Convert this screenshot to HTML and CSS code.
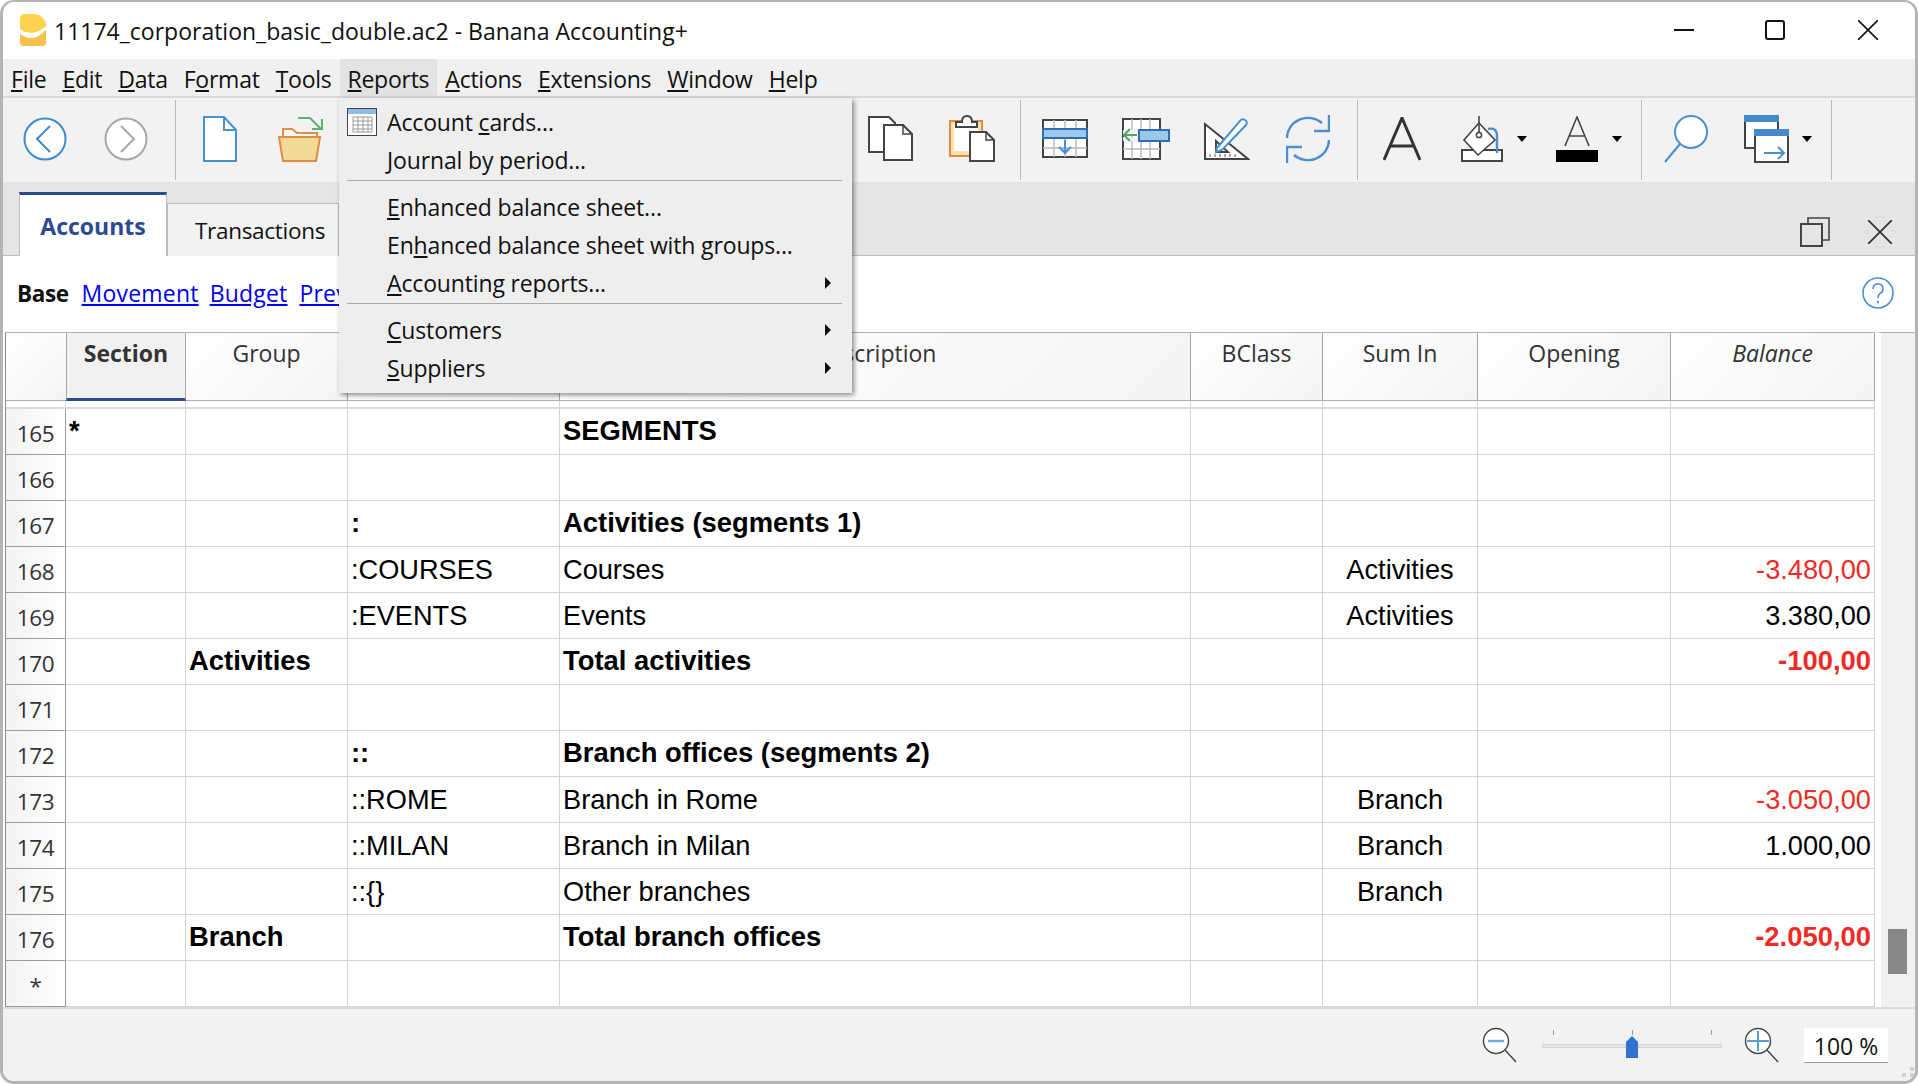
FILE: index.html
```html
<!DOCTYPE html>
<html lang="en">
<head>
    <meta charset="UTF-8" />
    <title>11174_corporation_basic_double.ac2 - Banana Accounting+</title>
    <link rel="stylesheet" href="styles.css">
</head>
<body>
<div class="window">
    <div class="titlebar">
        <svg class="app-icon" width="26" height="32" viewBox="0 0 26 32"><path d="M5 0H15Q19 0 22 3L25 7Q26 9 26 11V28Q26 32 22 32H4Q0 32 0 28V5Q0 0 5 0Z" fill="#fbd34e"/><path d="M0 15Q13 24 26 12V16Q13 30 0 20Z" fill="#fff"/><path d="M0 20Q13 30 26 16V28Q26 32 22 32H4Q0 32 0 28Z" fill="#f7c04a"/></svg>
        <span class="title">11174_corporation_basic_double.ac2 - Banana Accounting+</span>
        <div class="win-controls">
            <svg width="20" height="20" viewBox="0 0 20 20"><path d="M0 10H20" stroke="#111" stroke-width="2"/></svg>
            <svg width="20" height="20" viewBox="0 0 20 20"><rect x="1" y="1" width="18" height="18" rx="2" fill="none" stroke="#111" stroke-width="2"/></svg>
            <svg class="win-close" width="20" height="20" viewBox="0 0 20 20"><path d="M0 0L20 20M20 0L0 20" stroke="#111" stroke-width="1.6"/></svg>
        </div>
    </div>

    <div class="menubar">
        <span class="menu"><u>F</u>ile</span>
        <span class="menu"><u>E</u>dit</span>
        <span class="menu"><u>D</u>ata</span>
        <span class="menu">F<u>o</u>rmat</span>
        <span class="menu"><u>T</u>ools</span>
        <span class="menu menu-open"><u>R</u>eports</span>
        <span class="menu"><u>A</u>ctions</span>
        <span class="menu"><u>E</u>xtensions</span>
        <span class="menu"><u>W</u>indow</span>
        <span class="menu"><u>H</u>elp</span>
    </div>

    <div class="toolbar">
        <div class="tool"><svg width="44" height="44" viewBox="0 0 44 44"><circle cx="22" cy="22" r="20.5" fill="#fff" stroke="#3f8bd0" stroke-width="2"/><path d="M27 9L14 22L27 35" fill="none" stroke="#3f8bd0" stroke-width="2"/></svg></div>
        <div class="tool"><svg width="44" height="44" viewBox="0 0 44 44"><circle cx="22" cy="22" r="20.5" fill="#fff" stroke="#a8a8a8" stroke-width="2"/><path d="M17 9L30 22L17 35" fill="none" stroke="#a8a8a8" stroke-width="2"/></svg></div>
        <div class="sep"></div>
        <div class="tool"><svg width="34" height="46" viewBox="0 0 34 46"><path d="M1 1H21L33 14V45H1Z" fill="#fff" stroke="#4a90d0" stroke-width="2"/><path d="M21 1V14H33" fill="none" stroke="#4a90d0" stroke-width="2"/></svg></div>
        <div class="tool"><svg width="46" height="46" viewBox="0 0 46 46"><path d="M20 2H32L43 13" fill="none" stroke="#5cb272" stroke-width="2"/><path d="M44 3V13H34" fill="none" stroke="#5cb272" stroke-width="2"/><path d="M5 21V13H14L19 17H39V21" fill="#fff" stroke="#e38a45" stroke-width="2"/><path d="M1 21H42L38 45H5Z" fill="#f3da95" stroke="#e38a45" stroke-width="2"/></svg></div>
        <div class="tool-gap"></div>
        <div class="tool"><svg width="45" height="46" viewBox="0 0 45 46"><path d="M1 1H21L27 7V36H1Z" fill="#fff" stroke="#444" stroke-width="2"/><path d="M16 9H35L44 18V44H16Z" fill="#fff" stroke="#444" stroke-width="2"/><path d="M35 9V18H44" fill="none" stroke="#444" stroke-width="1.5"/></svg></div>
        <div class="tool"><svg width="46" height="48" viewBox="0 0 46 48"><rect x="1" y="6" width="32" height="35" fill="#f6e2ad" stroke="#e38a45" stroke-width="2"/><rect x="5" y="10" width="24" height="26" fill="#fff"/><path d="M7 12V7H13Q13 1 18 1Q23 1 23 7H28V12Z" fill="#fff" stroke="#444" stroke-width="2"/><path d="M21 17H37L45 25V46H21Z" fill="#fff" stroke="#444" stroke-width="2"/><path d="M37 17V25H45" fill="none" stroke="#444" stroke-width="1.5"/></svg></div>
        <div class="sep sep-near"></div>
        <div class="tool"><svg width="46" height="40" viewBox="0 0 46 40"><rect x="1" y="1" width="44" height="37" fill="#fff" stroke="#444" stroke-width="2"/><path d="M12 1V38M23 1V38M34 1V38M1 29H45" stroke="#bbb" stroke-width="1.5"/><rect x="1" y="10" width="44" height="9" fill="#9cc8ec" stroke="#2f6db5" stroke-width="2"/><path d="M23 21V33M17 28L23 34L29 28" fill="#9cc8ec" stroke="#4a90d0" stroke-width="2"/></svg></div>
        <div class="tool"><svg width="48" height="42" viewBox="0 0 48 42"><rect x="1" y="1" width="37" height="40" fill="#fff" stroke="#444" stroke-width="2"/><path d="M10 1V41M19 1V41M28 1V41M1 31H38" stroke="#bbb" stroke-width="1.5"/><path d="M1 14H24M1 21H24" stroke="#f2f2f2" stroke-width="4"/><rect x="17" y="12" width="30" height="11" fill="#9cc8ec" stroke="#2f6db5" stroke-width="2"/><path d="M15 17H2M8 11L2 17L8 23" fill="none" stroke="#4fa862" stroke-width="2"/></svg></div>
        <div class="tool"><svg width="46" height="44" viewBox="0 0 46 44"><path d="M1 7V42H44Z" fill="#fff" stroke="#444" stroke-width="2"/><path d="M12 24V35H24Z" fill="none" stroke="#444" stroke-width="2"/><path d="M6 37V40M11 37V40M16 37V40M21 37V40M26 37V40M31 37V40" stroke="#555" stroke-width="1"/><path d="M13 31L36 4Q38 1 41 3Q44 5 42 8L18 33L12 35Z" fill="#fff" stroke="#4a90d0" stroke-width="2"/></svg></div>
        <div class="tool"><svg width="44" height="48" viewBox="0 0 44 48"><path d="M1 23A21 20 0 0 1 36 8M43 25A21 20 0 0 1 8 40" fill="none" stroke="#4a90d0" stroke-width="2.4"/><path d="M43 0V16H28M1 48V32H16" fill="none" stroke="#4a90d0" stroke-width="2.4"/></svg></div>
        <div class="sep"></div>
        <div class="tool"><svg width="38" height="44" viewBox="0 0 38 44"><path d="M1 43L19 1L37 43M8 29H30" fill="none" stroke="#333" stroke-width="3"/></svg></div>
        <div class="tool-drop"><svg width="42" height="46" viewBox="0 0 42 46"><path d="M1 34H41V45H1Z" fill="#fff" stroke="#444" stroke-width="2"/><path d="M18 7L34 24L17 39L3 24Z" fill="#fff" stroke="#444" stroke-width="1.6"/><path d="M18 0V17" stroke="#444" stroke-width="1.6"/><circle cx="18" cy="19" r="2.6" fill="#fff" stroke="#444" stroke-width="1.5"/><path d="M27 13Q36 11 36 20V37" fill="none" stroke="#4a90d0" stroke-width="2.4"/></svg><span class="caret"></span></div>
        <div class="tool-drop"><svg width="42" height="46" viewBox="0 0 42 46"><path d="M9 30L21 1L33 30M13 20H29" fill="none" stroke="#444" stroke-width="1.6"/><rect x="0" y="34" width="42" height="12" fill="#000"/></svg><span class="caret"></span></div>
        <div class="sep"></div>
        <div class="tool"><svg width="44" height="48" viewBox="0 0 44 48"><circle cx="27" cy="17" r="16" fill="#fff" stroke="#4a90d0" stroke-width="2"/><path d="M16 29L1 47" stroke="#4a90d0" stroke-width="2"/></svg></div>
        <div class="tool-drop tool-drop-wide"><svg width="45" height="48" viewBox="0 0 45 48"><rect x="1" y="1" width="33" height="32" fill="#fff" stroke="#444" stroke-width="2"/><rect x="0" y="0" width="35" height="7" fill="#4389cb"/><rect x="11" y="15" width="33" height="32" fill="#fff" stroke="#444" stroke-width="2"/><rect x="10" y="14" width="35" height="7" fill="#4389cb"/><path d="M20 38H40M34 32L40 38L34 44" fill="none" stroke="#4a90d0" stroke-width="2"/></svg><span class="caret"></span></div>
        <div class="sep"></div>
    </div>

    <div class="tabbar">
        <div class="tab tab-active">Accounts</div>
        <div class="tab">Transactions</div>
        <div class="tab-icons">
            <svg width="30" height="30" viewBox="0 0 30 30"><path d="M8 6V1H29V23H22" fill="none" stroke="#444" stroke-width="1.6"/><rect x="1" y="7" width="21" height="22" fill="none" stroke="#444" stroke-width="2"/></svg>
            <svg width="24" height="24" viewBox="0 0 24 24"><path d="M0 0L24 24M24 0L0 24" stroke="#333" stroke-width="1.8"/></svg>
        </div>
    </div>

    <div class="viewbar">
        <span class="view-current">Base</span>
        <a class="view-link view-link-first">Movement</a>
        <a class="view-link">Budget</a>
        <a class="view-link">Prev</a>
        <svg class="help" width="32" height="32" viewBox="0 0 32 32"><circle cx="16" cy="16" r="15" fill="#fff" stroke="#4a90d0" stroke-width="1.6"/><path d="M11 12Q11 7 16 7Q21 7 21 12Q21 15 18 16.5Q16 18 16 21" fill="none" stroke="#4a90d0" stroke-width="1.6"/><circle cx="16" cy="25" r="1.2" fill="#4a90d0"/></svg>
    </div>

    <div class="grid-area">
        <table class="grid">
            <colgroup>
                <col class="c-row"><col class="c-section"><col class="c-group"><col class="c-account"><col class="c-desc"><col class="c-bclass"><col class="c-sumin"><col class="c-opening"><col class="c-balance">
            </colgroup>
            <thead>
                <tr>
                    <th></th><th class="th-current">Section</th><th>Group</th><th>Account</th><th>Description</th><th>BClass</th><th>Sum In</th><th>Opening</th><th class="th-calc">Balance</th>
                </tr>
            </thead>
            <tbody>
                <tr class="gap"><td></td><td></td><td></td><td></td><td></td><td></td><td></td><td></td><td></td></tr>
                <tr><td class="rownum">165</td><td class="b">*</td><td></td><td></td><td class="b">SEGMENTS</td><td></td><td></td><td></td><td></td></tr>
                <tr><td class="rownum">166</td><td></td><td></td><td></td><td></td><td></td><td></td><td></td><td></td></tr>
                <tr><td class="rownum">167</td><td></td><td></td><td class="b">:</td><td class="b">Activities (segments 1)</td><td></td><td></td><td></td><td></td></tr>
                <tr><td class="rownum">168</td><td></td><td></td><td>:COURSES</td><td>Courses</td><td></td><td class="mid">Activities</td><td></td><td class="amt neg">-3.480,00</td></tr>
                <tr><td class="rownum">169</td><td></td><td></td><td>:EVENTS</td><td>Events</td><td></td><td class="mid">Activities</td><td></td><td class="amt">3.380,00</td></tr>
                <tr><td class="rownum">170</td><td></td><td class="b">Activities</td><td></td><td class="b">Total activities</td><td></td><td></td><td></td><td class="amt neg b">-100,00</td></tr>
                <tr><td class="rownum">171</td><td></td><td></td><td></td><td></td><td></td><td></td><td></td><td></td></tr>
                <tr><td class="rownum">172</td><td></td><td></td><td class="b">::</td><td class="b">Branch offices (segments 2)</td><td></td><td></td><td></td><td></td></tr>
                <tr><td class="rownum">173</td><td></td><td></td><td>::ROME</td><td>Branch in Rome</td><td></td><td class="mid">Branch</td><td></td><td class="amt neg">-3.050,00</td></tr>
                <tr><td class="rownum">174</td><td></td><td></td><td>::MILAN</td><td>Branch in Milan</td><td></td><td class="mid">Branch</td><td></td><td class="amt">1.000,00</td></tr>
                <tr><td class="rownum">175</td><td></td><td></td><td>::{}</td><td>Other branches</td><td></td><td class="mid">Branch</td><td></td><td></td></tr>
                <tr><td class="rownum">176</td><td></td><td class="b">Branch</td><td></td><td class="b">Total branch offices</td><td></td><td></td><td></td><td class="amt neg b">-2.050,00</td></tr>
                <tr><td class="rownum rownum-new">*</td><td></td><td></td><td></td><td></td><td></td><td></td><td></td><td></td></tr>
            </tbody>
        </table>
        <div class="scrollbar"><div class="thumb"></div></div>
    </div>

    <div class="statusbar">
        <svg width="35" height="36" viewBox="0 0 35 36"><circle cx="14" cy="14" r="12.5" fill="#fff" stroke="#444" stroke-width="1.4"/><path d="M6 14H22" stroke="#6fa9dc" stroke-width="2.4"/><path d="M23 23L34 35" stroke="#444" stroke-width="1.4"/></svg>
        <div class="slider">
            <span class="tick tick-a"></span><span class="tick tick-b"></span><span class="tick tick-c"></span>
            <div class="track"></div>
            <svg class="knob" width="12" height="22" viewBox="0 0 12 22"><path d="M0 6L6 0L12 6V22H0Z" fill="#2f72cf"/></svg>
        </div>
        <svg width="35" height="36" viewBox="0 0 35 36"><circle cx="14" cy="14" r="12.5" fill="#fff" stroke="#444" stroke-width="1.4"/><path d="M3 14H25M14 4V24" stroke="#5b9bd5" stroke-width="2"/><path d="M23 23L34 35" stroke="#444" stroke-width="1.4"/></svg>
        <div class="zoom-box">100 %</div>
        <svg class="grip" width="13" height="11" viewBox="0 0 13 11"><path d="M8 0H12V4H8ZM0 6H4V10H0ZM8 6H12V10H8Z" fill="#d0d0d0"/></svg>
    </div>

    <!-- open Reports menu -->
    <div class="dropdown">
        <div class="dd-item">
            <svg class="dd-icon" width="30" height="28" viewBox="0 0 30 28"><rect x="0.5" y="0.5" width="29" height="27" fill="#fff" stroke="#444"/><rect x="1" y="1" width="28" height="5" fill="#8fbbe6"/><path d="M6 9H25V24H6ZM6 13H25M6 17H25M6 21H25M11 9V24M16 9V24M21 9V24" fill="none" stroke="#999"/></svg>
            Account <u>c</u>ards...
        </div>
        <div class="dd-item"><u>J</u>ournal by period...</div>
        <div class="dd-sep"></div>
        <div class="dd-item"><u>E</u>nhanced balance sheet...</div>
        <div class="dd-item">En<u>h</u>anced balance sheet with groups...</div>
        <div class="dd-item"><u>A</u>ccounting reports...<span class="dd-arrow"></span></div>
        <div class="dd-sep"></div>
        <div class="dd-item"><u>C</u>ustomers<span class="dd-arrow"></span></div>
        <div class="dd-item"><u>S</u>uppliers<span class="dd-arrow"></span></div>
    </div>
</div>
</body>
</html>
```

FILE: styles.css
```css
* {
    box-sizing: border-box;
}
html, body {
    margin: 0;
    height: 100%;
    background: #fff;
    overflow: hidden;
}
body {
    font-family: 'Open Sans', sans-serif;
    color: #111;
}
.window {
    position: relative;
    width: 1918px;
    height: 1084px;
    display: flex;
    flex-direction: column;
    border: 3px solid #b4b4b4;
    border-top-width: 2px;
    border-radius: 14px;
    overflow: hidden;
    background: #f2f2f2;
}

/* title bar */
.titlebar {
    height: 57px;
    flex: none;
    display: flex;
    align-items: center;
    background: #fff;
    padding-left: 17px;
}
.app-icon {
    margin-top: -2px;
}
.title {
    margin-left: 8px;
    font-size: 23px;
}
.win-controls {
    margin-left: auto;
    display: flex;
    gap: 71px;
    padding-right: 37px;
    margin-top: -2px;
}
.win-close {
    margin-left: 2px;
}

/* menu bar */
.menubar {
    height: 39px;
    flex: none;
    display: flex;
    background: #f0f0f0;
    border-bottom: 2px solid #dadada;
    font-size: 23px;
    letter-spacing: -0.25px;
}
.menu {
    padding: 0 8px;
    height: 37px;
    line-height: 41px;
    overflow: hidden;
}
.menu-open {
    background: #e3e3e3;
}

/* toolbar */
.toolbar {
    height: 84px;
    flex: none;
    display: flex;
    align-items: stretch;
    padding-left: 1px;
    padding-bottom: 2px;
    background: #f2f2f2;
}
.tool {
    width: 81px;
    display: flex;
    align-items: center;
    justify-content: center;
}
.tool-gap {
    width: 509px;
}
.tool-drop {
    width: 95px;
    display: flex;
    align-items: center;
    gap: 14px;
    padding-left: 19px;
}
.tool-drop-wide {
    width: 96px;
    padding-left: 18px;
    gap: 13px;
}
.caret {
    width: 0;
    height: 0;
    border-left: 5px solid transparent;
    border-right: 5px solid transparent;
    border-top: 6px solid #000;
}
.sep {
    width: 1px;
    margin: 2px 3px 0 9px;
    background: #bbb;
}
.sep-near {
    margin-left: 8px;
}

/* document tabs */
.tabbar {
    height: 74px;
    flex: none;
    display: flex;
    align-items: flex-end;
    background: #e5e5e5;
    border-bottom: 1px solid #bdbdbd;
    padding-left: 16px;
}
.tab {
    height: 53px;
    width: 172px;
    background: #f2f2f2;
    border: 1px solid #bdbdbd;
    border-bottom: none;
    margin-bottom: -1px;
    font-size: 22.5px;
    letter-spacing: -0.3px;
    padding-left: 27px;
    line-height: 54px;
}
.tab-active {
    height: 64px;
    width: 148px;
    background: #fff;
    border-top: 3px solid #2c4a94;
    color: #2c4a94;
    font-size: 23px;
    font-weight: 700;
    letter-spacing: 0;
    padding-left: 0;
    text-align: center;
    line-height: 62px;
}
.tab-icons {
    margin-left: auto;
    display: flex;
    align-items: center;
    gap: 38px;
    padding-right: 23px;
    padding-bottom: 8px;
}

/* view links */
.viewbar {
    height: 76px;
    flex: none;
    display: flex;
    align-items: center;
    gap: 12px;
    background: #fff;
    padding-left: 14px;
    padding-bottom: 2px;
    font-size: 23px;
}
.view-current {
    font-weight: 700;
    font-size: 22.5px;
    letter-spacing: -0.4px;
}
.view-link {
    color: #0000ee;
    text-decoration: underline;
    letter-spacing: 0.2px;
}
.view-link-first {
    margin-left: 1px;
    margin-right: -1px;
}
.help {
    margin-left: auto;
    margin-right: 21px;
}

/* table */
.grid-area {
    flex: 1;
    display: flex;
    background: #fff;
    padding-left: 2px;
    border-bottom: 2px solid #dcdcdc;
}
.grid {
    width: 1869px;
    height: 100%;
    table-layout: fixed;
    border-collapse: separate;
    border-spacing: 0;
    border-left: 1px solid #8c8c8c;
    border-top: 1px solid #b0b0b0;
    font-family: 'Liberation Sans', sans-serif;
    font-size: 27.2px;
    color: #000;
}
.c-row { width: 60px; }
.c-section { width: 120px; }
.c-group { width: 162px; }
.c-account { width: 212px; }
.c-desc { width: 631px; }
.c-bclass { width: 132px; }
.c-sumin { width: 155px; }
.c-opening { width: 193px; }
.c-balance { width: 204px; }
.grid th {
    height: 68px;
    padding: 5px 0 0;
    vertical-align: top;
    font-family: 'Open Sans', sans-serif;
    font-size: 23px;
    font-weight: 400;
    line-height: 30px;
    color: #333;
    background: linear-gradient(135deg, #fff, #f4f4f4);
    border-right: 1px solid #a8a8a8;
    border-bottom: 1px solid #b0b0b0;
}
.grid th:first-child {
    border-right: none;
}
.grid .th-current {
    font-weight: 700;
    background: #f1f1f1;
    border-left: 1px solid #a8a8a8;
    border-bottom: 3px solid #2c4a94;
}
.grid .th-calc {
    font-style: italic;
}
.grid td {
    height: 46px;
    padding: 0 3px;
    white-space: nowrap;
    border-right: 1px solid #d4d4d4;
    border-bottom: 1px solid #d4d4d4;
}
.grid .gap td {
    height: 8px;
    padding: 0;
    font-size: 0;
    border-bottom: 2px solid #dcdcdc;
}
.grid .b {
    font-weight: 700;
    font-size: 27.4px;
    padding-bottom: 2px;
}
.grid .mid {
    text-align: center;
}
.grid .amt {
    text-align: right;
}
.grid .neg {
    color: #ee2b24;
}
.grid .rownum {
    padding: 3px 0 0;
    text-align: center;
    font-family: 'Open Sans', sans-serif;
    font-size: 22.5px;
    letter-spacing: -0.3px;
    color: #333;
    background: linear-gradient(90deg, #f3f3f3, #fff);
    border-right: 1px solid #9c9c9c;
    border-bottom: 1px solid #9c9c9c;
}
.scrollbar {
    width: 41px;
    border-left: 6px solid #fff;
    border-top: 1px solid #b0b0b0;
    background: #f1f1f1;
    position: relative;
}
.thumb {
    position: absolute;
    left: 7px;
    top: 596px;
    width: 19px;
    height: 45px;
    background: #878787;
}

/* status bar */
.statusbar {
    flex: 1;
    position: relative;
    display: flex;
    align-items: center;
    justify-content: flex-end;
    padding-right: 27px;
    background: #f2f2f2;
}
.slider {
    position: relative;
    width: 180px;
    height: 34px;
    margin: 0 22px 0 25px;
}
.track {
    position: absolute;
    left: 0;
    right: 0;
    top: 16px;
    height: 4px;
    background: #e4e4e4;
    border: 1px solid #d4d4d4;
}
.tick {
    position: absolute;
    top: 2px;
    width: 1px;
    height: 5px;
    background: #999;
}
.tick-a { left: 11px; }
.tick-b { left: 90px; }
.tick-c { left: 169px; }
.knob {
    position: absolute;
    left: 84px;
    top: 8px;
}
.zoom-box {
    width: 84px;
    height: 35px;
    margin-left: 25px;
    text-align: center;
    font-size: 23px;
    line-height: 36px;
    background: #fff;
    border-bottom: 1px solid #999;
}
.grip {
    position: absolute;
    right: 0;
    bottom: 3px;
}

/* open menu, lies over the toolbar and the table */
.dropdown {
    position: absolute;
    left: 336px;
    top: 96px;
    width: 513px;
    height: 295px;
    padding: 5px 8px 0 6px;
    background: #eee;
    box-shadow: 2px 2px 5px rgba(0,0,0,0.45);
    font-size: 23px;
    letter-spacing: -0.15px;
    color: #111;
}
.dd-item {
    position: relative;
    height: 38px;
    line-height: 38px;
    padding-left: 42px;
}
.dd-icon {
    position: absolute;
    left: 2px;
    top: 5px;
}
.dd-sep {
    height: 1px;
    margin: 1px 2px 7px 2px;
    background: #aaa;
}
.dd-arrow {
    position: absolute;
    right: 13px;
    top: 13px;
    width: 0;
    height: 0;
    border-top: 6px solid transparent;
    border-bottom: 6px solid transparent;
    border-left: 6px solid #111;
}
```
